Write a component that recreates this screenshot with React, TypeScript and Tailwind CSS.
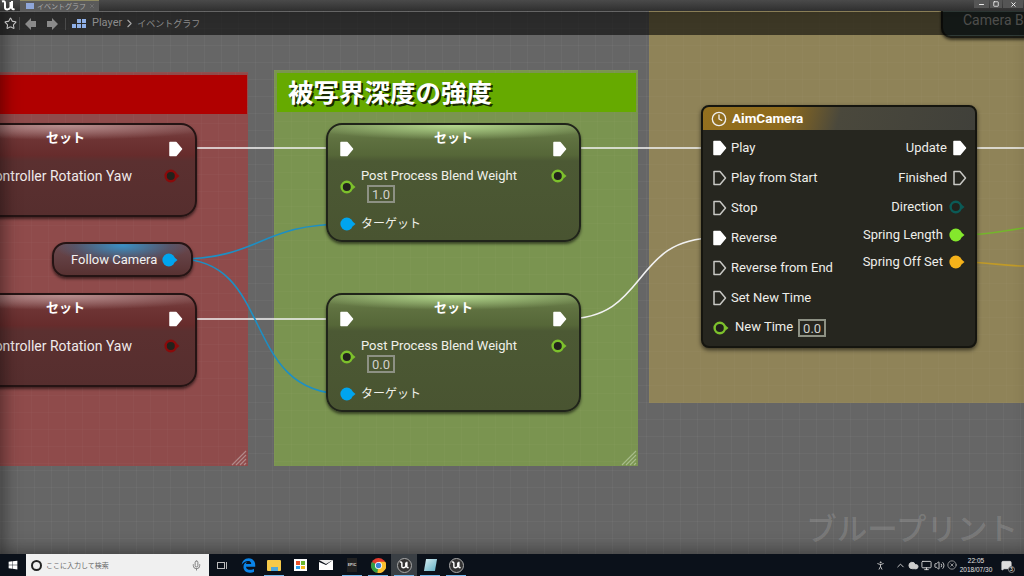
import { Clock, Mic, Star, ChevronUp, ChevronRight, Volume2, Monitor, Cloud, PersonStanding, X, Square, Minus, XCircle, MessageSquare } from "lucide-react";
import { FaWindows, FaEdgeLegacy } from "react-icons/fa";

const font = "font-['Roboto','Noto_Sans_CJK_JP',sans-serif]";

function ExecPin({ filled = true }: { filled?: boolean }) {
  return (
    <svg width="14" height="16" viewBox="0 0 14 16" className="shrink-0">
      <path
        d="M1 1.5h6l5.5 6.5-5.5 6.5H1z"
        fill={filled ? "#ffffff" : "none"}
        stroke={filled ? "#ffffff" : "#c8c8c4"}
        strokeWidth="1.5"
        strokeLinejoin="round"
      />
    </svg>
  );
}

function DataPin({ color, hollow = false }: { color: string; hollow?: boolean }) {
  return (
    <svg width="16" height="14" viewBox="0 0 16 14" className="shrink-0">
      <path d="M12.5 4.5l3 2.5-3 2.5z" fill={color} />
      <circle cx="6.8" cy="7" r={hollow ? 5.2 : 6.4} fill={hollow ? "#22221c" : color} stroke={color} strokeWidth={hollow ? 2.4 : 0} />
    </svg>
  );
}

function ValueBox({ value }: { value: string }) {
  return (
    <div className="flex h-[18px] w-[28px] items-center justify-center border-2 border-[#8d9184] text-[13px] leading-none text-[#d0d0cc]">
      {value}
    </div>
  );
}

function SetNode({ value, className }: { value: string; className: string }) {
  return (
    <div className={`absolute h-[119px] w-[255px] rounded-[16px] border-2 border-[#20241a] bg-[radial-gradient(ellipse_60%_15px_at_50%_0,#b4d88e,transparent),linear-gradient(180deg,#748a52_0px,#5f7140_14px,#566738_30px,#4c5934_36px,#495431_100%)] text-[13px] text-[#f0f0ea] shadow-[0_2px_3px_rgba(0,0,0,0.55)] ${className}`}>
      <div className="flex items-start px-[12px]">
        <div className="mt-[16px]"><ExecPin /></div>
        <div className="mt-[4px] flex-1 text-center text-[13px] font-bold leading-[18px] text-white">セット</div>
        <div className="mt-[16px]"><ExecPin /></div>
      </div>
      <div className="mt-[10px] flex items-start px-[12px]">
        <div className="mt-[13px]"><DataPin color="#7dc12c" hollow /></div>
        <div className="ml-[5px] flex-1">
          <div className="h-[18px] leading-[18px]">Post Process Blend Weight</div>
          <div className="ml-[6px]"><ValueBox value={value} /></div>
        </div>
        <div className="mt-[2px]"><DataPin color="#7dc12c" hollow /></div>
      </div>
      <div className="mt-[12px] flex h-[18px] items-center gap-[5px] pl-[12px]">
        <DataPin color="#00a5ef" />
        <span className="text-[12px]">ターゲット</span>
      </div>
    </div>
  );
}

function RedNode({ className }: { className: string }) {
  return (
    <div className={`absolute h-[94px] w-[265px] rounded-[16px] border-2 border-[#251414] bg-[radial-gradient(ellipse_60%_15px_at_50%_0,#b99090,transparent),linear-gradient(180deg,#7e4a4a_0px,#6e3434_14px,#672c2c_30px,#5b3030_36px,#562e2e_100%)] text-[14px] text-[#f0eaea] shadow-[0_2px_3px_rgba(0,0,0,0.55)] ${className}`}>
      <div className="flex items-start pr-[12px]">
        <div className="mt-[4px] flex-1 pl-[28px] text-center text-[13px] font-bold leading-[18px] text-white">セット</div>
        <div className="mt-[16px]"><ExecPin /></div>
      </div>
      <div className="mt-[10px] flex h-[18px] items-center justify-end gap-[32px] pr-[15px]">
        <span className="whitespace-nowrap">Controller Rotation Yaw</span>
        <DataPin color="#8a0a0a" hollow />
      </div>
    </div>
  );
}

function CommentBox({ title, className, headerClass, gripClass }: { title?: string; className: string; headerClass?: string; gripClass: string }) {
  return (
    <div className={`absolute ${className}`}>
      {headerClass && (
        <div className={`ml-[3px] mt-[3px] flex h-[39px] items-center pl-[11px] pt-[3px] text-[25.5px] font-bold leading-none text-white [text-shadow:2px_2px_0_rgba(0,0,0,0.75)] ${headerClass}`}>
          {title}
        </div>
      )}
      <svg width="16" height="16" viewBox="0 0 16 16" className={`absolute bottom-0 right-[1px] ${gripClass}`}>
        <path d="M1 15L15 1M5 15L15 5M9 15l6-6M13 15l2-2" stroke="currentColor" strokeWidth="1.2" />
      </svg>
    </div>
  );
}

type Row = { label: string; pin: React.ReactNode; cls: string };

const rightRows: Row[] = [
  { label: "Update", pin: <ExecPin />, cls: "h-[30px] gap-[6px] pr-[8px]" },
  { label: "Finished", pin: <ExecPin filled={false} />, cls: "h-[30px] gap-[6px] pr-[8px]" },
  { label: "Direction", pin: <DataPin color="#0b5a56" hollow />, cls: "h-[28px] gap-[6px] pr-[10px]" },
  { label: "Spring Length", pin: <DataPin color="#84e82c" />, cls: "h-[28px] gap-[6px] pr-[10px]" },
  { label: "Spring Off Set", pin: <DataPin color="#f5b21a" />, cls: "h-[26px] gap-[6px] pr-[10px]" },
];

const leftRows: { label: string; filled: boolean }[] = [
  { label: "Play", filled: true },
  { label: "Play from Start", filled: false },
  { label: "Stop", filled: false },
  { label: "Reverse", filled: true },
  { label: "Reverse from End", filled: false },
  { label: "Set New Time", filled: false },
];

function AimCamera() {
  return (
    <div className="absolute left-[701px] top-[94px] h-[243px] w-[276px] rounded-[8px] border-2 border-[#15150f] bg-[#26261f] text-[13px] text-[#eeeeea] shadow-[0_2px_4px_rgba(0,0,0,0.6)]">
      <div className="flex h-[23px] items-center gap-[5px] rounded-t-[6px] bg-[linear-gradient(105deg,#94701f_0%,#8d6a1d_30%,#4a483c_50%,#40403a_100%)] pl-[8px] text-[13.5px] font-bold text-white">
        <Clock size={16} strokeWidth={2} className="text-[#eee]" />
        <span>AimCamera</span>
      </div>
      <div className="flex justify-between pt-[3px]">
        <div className="flex flex-col pl-[10px]">
          {leftRows.map((r) => (
            <div key={r.label} className="flex h-[30px] items-center gap-[4px]">
              <ExecPin filled={r.filled} />
              <span>{r.label}</span>
            </div>
          ))}
          <div className="flex h-[30px] items-center">
            <DataPin color="#7dc12c" hollow />
            <span className="mb-[3px] ml-[6px]">New Time</span>
            <div className="ml-[5px]"><ValueBox value="0.0" /></div>
          </div>
        </div>
        <div className="flex flex-col items-end">
          {rightRows.map((r) => (
            <div key={r.label} className={`flex items-center ${r.cls}`}>
              <span>{r.label}</span>
              {r.pin}
            </div>
          ))}
        </div>
      </div>
    </div>
  );
}

function FollowCamera() {
  return (
    <div className="absolute left-[52px] top-[231px] flex h-[35px] w-[141px] items-center rounded-[14px] border-2 border-[#251414] bg-[radial-gradient(ellipse_50%_60%_at_50%_5%,#3b8fc4_0%,rgba(80,90,115,0.7)_70%,transparent_100%),linear-gradient(180deg,#6b4a50,#583232)] pl-[17px] text-[13px] text-[#f2f2f2] shadow-[0_2px_3px_rgba(0,0,0,0.55)]">
      <span>Follow Camera</span>
      <span className="ml-[5px]"><DataPin color="#00a5ef" /></span>
    </div>
  );
}

function Wires() {
  return (
    <svg width="1024" height="543" viewBox="0 11 1024 543" className="absolute left-0 top-0">
      <g fill="none" strokeWidth="1.6">
        <path d="M180 148H340M565 148H715M965 148H1024M180 319H340" stroke="#f2f2f2" />
        <path d="M565 319C650 319 630 238 715 238" stroke="#f2f2f2" />
        <path d="M178 259C260 259 260 224 345 224" stroke="#1d8fc4" />
        <path d="M178 259C275 259 240 394 345 394" stroke="#1d8fc4" />
        <path d="M960 235C990 235 1000 231 1024 228" stroke="#74b52c" />
        <path d="M960 262C990 262 1000 266 1024 266" stroke="#c09a28" />
      </g>
    </svg>
  );
}

function BreadcrumbBar() {
  return (
    <div className="absolute left-0 right-0 top-[1px] flex h-[23px] items-center bg-[rgba(0,0,0,0.58)] text-[11px] text-[#8c8c8c]">
      <div className="flex w-[20px] justify-center border-r border-[#4a4a4a] pl-[1px]">
        <Star size={13} className="text-[#c4c4c4]" />
      </div>
      <div className="flex w-[46px] items-center justify-center gap-[11px] border-r border-[#4a4a4a] pr-[2px]">
        <svg width="11" height="12" viewBox="0 0 11 12"><path d="M0 6l6-6v3h5v6H6v3z" fill="#8a8a8a" /></svg>
        <svg width="11" height="12" viewBox="0 0 11 12"><path d="M11 6L5 0v3H0v6h5v3z" fill="#8a8a8a" /></svg>
      </div>
      <div className="ml-[6px] grid grid-cols-3 gap-[1px]">
        <span className="col-start-2 h-[4px] w-[4px] bg-[#8fb0e8]" />
        <span className="h-[4px] w-[4px] bg-[#8fb0e8]" />
        <span className="h-[4px] w-[4px] bg-[#8fb0e8]" />
        <span className="h-[4px] w-[4px] bg-[#8fb0e8]" />
        <span className="h-[4px] w-[4px] bg-[#8fb0e8]" />
      </div>
      <span className="ml-[6px]">Player</span>
      <ChevronRight size={13} className="mx-[1px] text-[#a8a8a8]" />
      <span className="font-['Noto_Sans_CJK_JP',sans-serif] text-[9px]">イベントグラフ</span>
    </div>
  );
}

function UeMark({ width, height }: { width: number; height: number }) {
  return (
    <svg width={width} height={height} viewBox="0 0 14 11">
      <path d="M1 1.5C3 .8 4 1.500 4 3v4.500C4 10 8 10 9.500 7.500V2M11 1v7c0 1 1 1.500 2.500 1" fill="none" stroke="#fff" strokeWidth="2" />
    </svg>
  );
}

function TitleBar() {
  return (
    <div className="flex h-[11px] items-stretch bg-[linear-gradient(180deg,#4a4a4a,#2f2f2f)]">
      <div className="w-[20px] pl-[1px]"><UeMark width={14} height={11} /></div>
      <div className="flex w-[79px] items-center gap-[3px] border-t border-[#8f8a62] bg-[#5a5a5a] pl-[6px] font-['Noto_Sans_CJK_JP',sans-serif] text-[7px] leading-none text-[#a9a9a9]">
        <span className="h-[6px] w-[8px] bg-[#8fa6d8]" />
        <span className="flex-1">イベントグラフ</span>
        <X size={6} className="mr-[4px] text-[#888]" />
      </div>
      <div className="flex-1" />
      <div className="mr-[1px] flex h-[8px] items-center gap-[1px] text-white">
        <span className="flex h-[8px] w-[15px] items-center justify-center bg-[#555]"><Minus size={7} strokeWidth={3} /></span>
        <span className="flex h-[8px] w-[12px] items-center justify-center bg-[#555]"><Square size={6} strokeWidth={3} /></span>
        <span className="flex h-[8px] w-[20px] items-center justify-center bg-[#555]"><X size={7} strokeWidth={3} /></span>
      </div>
    </div>
  );
}

function Chrome() {
  return (
    <svg width="15" height="15" viewBox="0 0 16 16">
      <circle cx="8" cy="8" r="8" fill="#e33b2e" />
      <path d="M8 8L1 4.2A8 8 0 0 0 7 16z" fill="#2f9e44" />
      <path d="M8 4h7.2A8 8 0 0 1 7 16z" fill="#fbc02d" />
      <circle cx="8" cy="8" r="3.8" fill="#fff" />
      <circle cx="8" cy="8" r="2.9" fill="#3b82d6" />
    </svg>
  );
}

function UeBadge() {
  return (
    <span className="flex h-[15px] w-[15px] items-center justify-center rounded-full border border-[#aaa] bg-[#333]">
      <UeMark width={10} height={8} />
    </span>
  );
}

function TaskItem({ children, active, open = true }: { children: React.ReactNode; active?: boolean; open?: boolean }) {
  return (
    <div className={`relative flex h-full w-[26px] items-center justify-center ${active ? "bg-[#3a3f44]" : ""}`}>
      {children}
      {open && <span className="absolute bottom-0 left-[3px] right-[3px] h-[1px] bg-[#76b9ed]" />}
    </div>
  );
}

function Taskbar() {
  return (
    <div className="flex h-[22px] items-center bg-[#0b111a] text-[#d8d8d8]">
      <div className="flex w-[26px] justify-center"><FaWindows size={10} className="text-white" /></div>
      <div className="flex h-full w-[183px] items-center bg-[#f0f0f0] pl-[5px] pr-[7px] font-['Noto_Sans_CJK_JP',sans-serif] text-[7px] text-[#666]">
        <span className="h-[11px] w-[11px] rounded-full border-2 border-[#222]" />
        <span className="ml-[4px] flex-1">ここに入力して検索</span>
        <Mic size={11} className="text-[#777]" />
      </div>
      <div className="flex w-[26px] justify-center">
        <span className="h-[7px] w-[8px] border border-[#bbb]" />
        <span className="ml-[1px] h-[7px] w-[2px] border-l border-[#bbb]" />
      </div>
      <div className="flex h-full">
        <TaskItem open={false}><FaEdgeLegacy size={15} className="text-[#0a84e8]" /></TaskItem>
        <TaskItem>
          <span className="flex h-[11px] w-[14px] items-end justify-center rounded-[1px] bg-[#f5c94a]"><span className="h-[4px] w-[7px] bg-[#4fa8dc]" /></span>
        </TaskItem>
        <TaskItem open={false}>
          <span className="grid h-[12px] w-[13px] grid-cols-2 gap-[1px] bg-white p-[2px]">
            <span className="bg-[#e8522a]" /><span className="bg-[#6cb82c]" /><span className="bg-[#2a9ce8]" /><span className="bg-[#f5b81a]" />
          </span>
        </TaskItem>
        <TaskItem open={false}>
          <svg width="14" height="10" viewBox="0 0 14 10">
            <path d="M0 2l7 3 7-5v10H0z" fill="#fff" />
            <path d="M0 0h14L7 4z" fill="#eee" />
          </svg>
        </TaskItem>
        <TaskItem>
          <span className="flex h-[14px] w-[10px] items-center justify-center bg-[#222] text-[4px] font-bold text-[#ccc]">EPIC</span>
        </TaskItem>
        <TaskItem><Chrome /></TaskItem>
        <TaskItem active><UeBadge /></TaskItem>
        <TaskItem>
          <span className="h-[12px] w-[11px] skew-x-[-10deg] bg-[linear-gradient(135deg,#cfe9ee,#69b4c8)]" />
        </TaskItem>
        <TaskItem><UeBadge /></TaskItem>
      </div>
      <div className="flex-1" />
      <div className="flex items-center">
        <PersonStanding size={11} className="mr-[9px] text-[#ccc]" />
        <ChevronUp size={11} className="mr-[2px]" />
        <Cloud size={11} fill="#ccc" className="mr-[2px] text-[#ccc]" />
        <Monitor size={11} className="mr-[2px]" />
        <Volume2 size={11} className="mr-[2px]" />
        <XCircle size={10} className="mr-[1px] text-[#aaa]" />
        <div className="flex w-[36px] flex-col items-center font-['Liberation_Sans',sans-serif] text-[6.5px] leading-[9px] text-[#e0e0e0]">
          <span>22:05</span>
          <span>2018/07/30</span>
        </div>
        <div className="relative ml-[7px] mr-[12px]">
          <MessageSquare size={11} fill="#ddd" className="text-[#ddd]" />
          <span className="absolute -bottom-[2px] -right-[3px] flex h-[7px] w-[7px] items-center justify-center rounded-full border border-[#888] bg-[#111] text-[5px] leading-none text-white">3</span>
        </div>
      </div>
    </div>
  );
}

export default function App() {
  return (
    <div className={`flex h-[576px] w-[1024px] flex-col overflow-hidden bg-black ${font}`}>
      <TitleBar />
      <div className="relative flex-1 overflow-hidden bg-[#666666] bg-[linear-gradient(rgba(255,255,255,0.035)_1px,transparent_1px),linear-gradient(90deg,rgba(255,255,255,0.035)_1px,transparent_1px)] bg-[size:17px_17px]">
        <CommentBox
          className="left-[-3px] top-[61px] h-[394px] w-[251px] bg-[#8f4b4b] bg-[linear-gradient(rgba(255,255,255,0.02)_1px,transparent_1px),linear-gradient(90deg,rgba(255,255,255,0.02)_1px,transparent_1px)] bg-[size:17px_17px]"
          headerClass="mr-[1px] bg-[#b00000]"
          gripClass="text-[#b08a8a]"
        />
        <CommentBox
          title="被写界深度の強度"
          className="left-[274px] top-[59px] h-[396px] w-[364px] bg-[#7a9450] bg-[linear-gradient(rgba(255,255,255,0.02)_1px,transparent_1px),linear-gradient(90deg,rgba(255,255,255,0.02)_1px,transparent_1px)] bg-[size:17px_17px]"
          headerClass="mr-[2px] bg-[#66aa00]"
          gripClass="text-[#a7bb8a]"
        />
        <div className="absolute left-[649px] top-0 h-[392px] w-[375px] bg-[#8f8358] bg-[linear-gradient(rgba(255,255,255,0.02)_1px,transparent_1px),linear-gradient(90deg,rgba(255,255,255,0.02)_1px,transparent_1px)] bg-[size:17px_17px]" />

        <Wires />

        <RedNode className="left-[-68px] top-[112px]" />
        <RedNode className="left-[-68px] top-[282px]" />
        <FollowCamera />
        <SetNode value="1.0" className="left-[326px] top-[112px]" />
        <SetNode value="0.0" className="left-[326px] top-[282px]" />
        <AimCamera />

        <div className="absolute left-[941px] top-[-20px] h-[47px] w-[100px] rounded-[10px] border-2 border-[#1b1b14] bg-[#2f3a36] pl-[20px] pt-[18px] text-[14px] leading-[18px] text-[#b9b9b4] shadow-[0_2px_3px_rgba(0,0,0,0.6)]">
          <span className="whitespace-nowrap">Camera Box</span>
        </div>

        <div className="absolute bottom-[12px] right-[6px] font-['Noto_Sans_CJK_JP',sans-serif] text-[30.5px] font-medium leading-none text-[rgba(255,255,255,0.15)]">
          ブループリント
        </div>
        <div className="absolute inset-0 shadow-[inset_12px_0_18px_-8px_rgba(0,0,0,0.35),inset_0_-12px_18px_-8px_rgba(0,0,0,0.3)]" />
        <BreadcrumbBar />
      </div>
      <Taskbar />
    </div>
  );
}
